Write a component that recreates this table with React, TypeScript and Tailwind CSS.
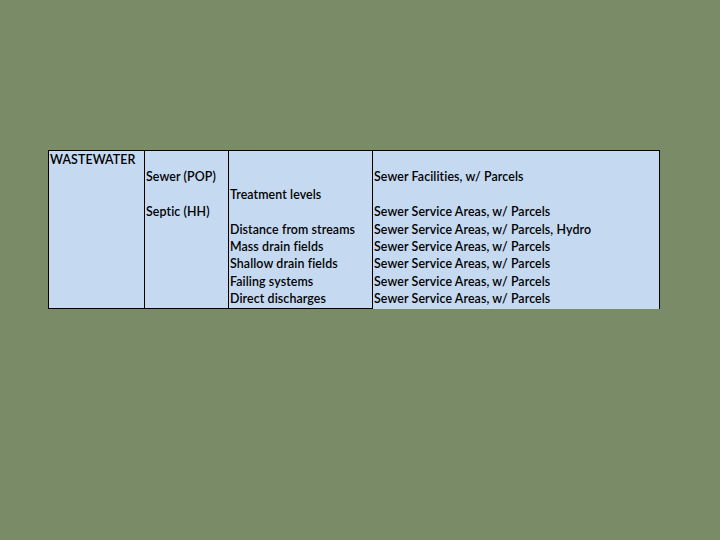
const COL1 = ["WASTEWATER", "", "", "", "", "", "", "", ""];
const COL2 = ["", "Sewer (POP)", "", "Septic (HH)", "", "", "", "", ""];
const COL3 = [
  "",
  "",
  "Treatment levels",
  "",
  "Distance from streams",
  "Mass drain fields",
  "Shallow drain fields",
  "Failing systems",
  "Direct discharges",
];
const COL4 = [
  "",
  "Sewer Facilities, w/ Parcels",
  "",
  "Sewer Service Areas, w/ Parcels",
  "Sewer Service Areas, w/ Parcels, Hydro",
  "Sewer Service Areas, w/ Parcels",
  "Sewer Service Areas, w/ Parcels",
  "Sewer Service Areas, w/ Parcels",
  "Sewer Service Areas, w/ Parcels",
];

function Column({ rows, className }: { rows: string[]; className: string }) {
  return (
    <div className={`flex flex-col ${className}`}>
      {rows.map((r, i) => (
        <div key={i} className="h-[17.4px] whitespace-nowrap pl-px leading-[17px]">
          {r}
        </div>
      ))}
    </div>
  );
}

export default function App() {
  return (
    <div className="h-[540px] w-[720px] bg-[#7a8b68] pt-[150px] pl-[48px]">
      <div
        className="flex w-[612px] bg-[#c5d9f1] text-[12.4px] font-semibold tracking-[0.1px] text-black"
        style={{ fontFamily: "Lato, 'Open Sans', sans-serif" }}
      >
        <Column rows={COL1} className="w-[96px] border-t border-b border-l border-black" />
        <Column rows={COL2} className="w-[84px] border-t border-b border-l border-black" />
        <Column rows={COL3} className="w-[145px] border-t border-b border-l border-r border-black" />
        <Column rows={COL4} className="flex-1 border-t border-r border-black" />
      </div>
    </div>
  );
}
